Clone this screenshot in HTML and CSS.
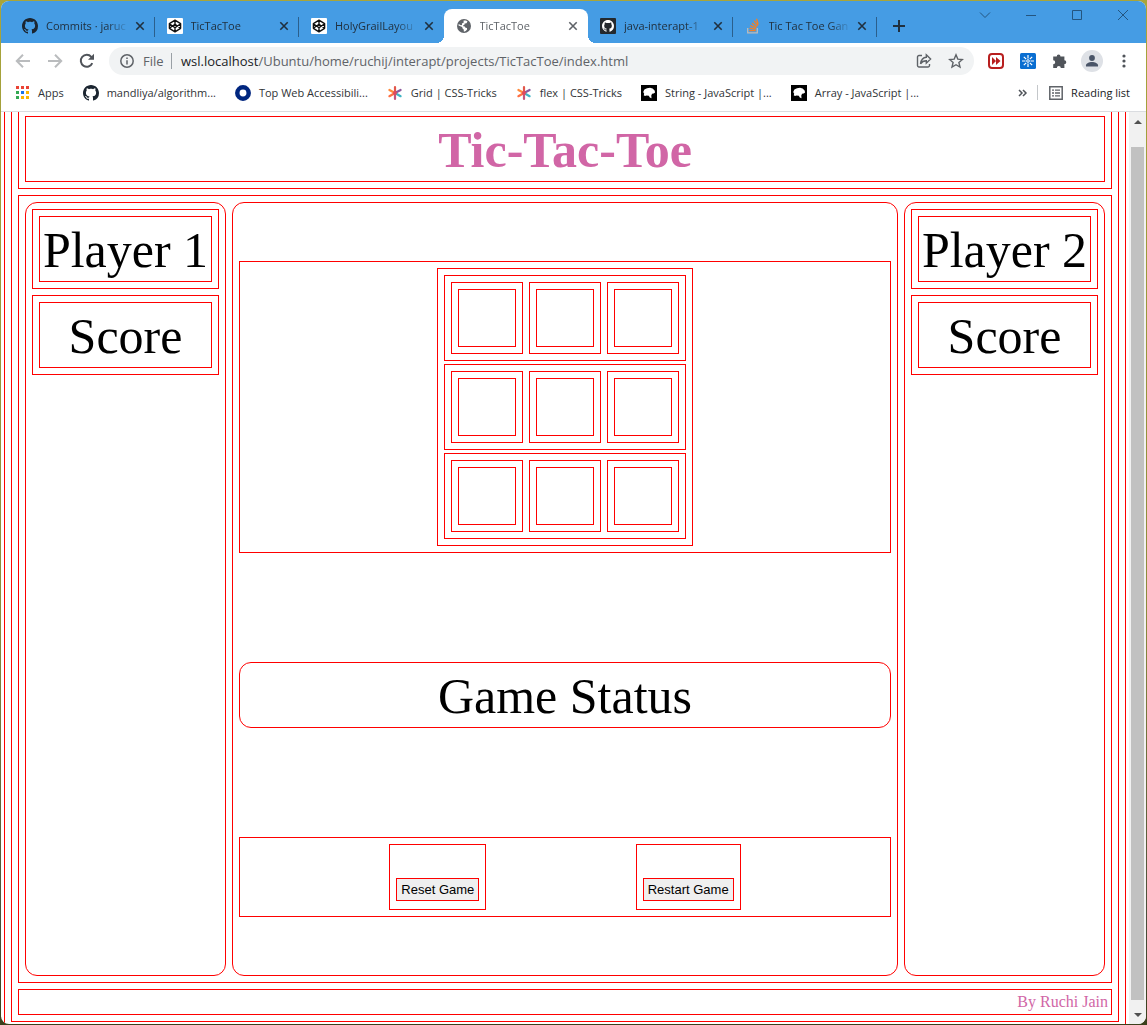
FILE: index.html
```html
<!DOCTYPE html>
<html lang="en">
<head>
<meta charset="utf-8">
<meta name="viewport" content="width=device-width, initial-scale=1">
<title>TicTacToe</title>
<link rel="stylesheet" href="styles.css">
</head>
<body>
<svg class="sprite" aria-hidden="true">
  <symbol id="github" viewBox="0 0 16 16"><path d="M8 0C3.58 0 0 3.58 0 8c0 3.54 2.29 6.53 5.47 7.59.4.07.55-.17.55-.38 0-.19-.01-.82-.01-1.49-2.01.37-2.53-.49-2.69-.94-.09-.23-.48-.94-.82-1.13-.28-.15-.68-.52-.01-.53.63-.01 1.08.58 1.23.82.72 1.21 1.87.87 2.33.66.07-.52.28-.87.51-1.07-1.78-.2-3.64-.89-3.64-3.95 0-.87.31-1.59.82-2.15-.08-.2-.36-1.02.08-2.12 0 0 .67-.21 2.2.82.64-.18 1.32-.27 2-.27s1.36.09 2 .27c1.53-1.04 2.2-.82 2.2-.82.44 1.1.16 1.92.08 2.12.51.56.82 1.27.82 2.15 0 3.07-1.87 3.75-3.65 3.95.29.25.54.73.54 1.48 0 1.07-.01 1.93-.01 2.2 0 .21.15.46.55.38A8.01 8.01 0 0 0 16 8c0-4.42-3.58-8-8-8z"/></symbol>
  <symbol id="codepen" viewBox="0 0 16 16"><rect width="16" height="16" rx="1" fill="#fff"/><path d="M8 2.2 13.600 5.700v4.600L8 13.800 2.400 10.300V5.700zM2.400 5.700 8 9.800 13.600 5.700M2.400 10.300 8 6.200l5.600 4.100M8 2.200v4M8 9.800v4" fill="none" stroke="#111" stroke-width="1.4" stroke-linejoin="round"/></symbol>
  <symbol id="close" viewBox="0 0 10 10"><path d="M1.3 1.3l7.4 7.4M8.7 1.3 1.3 8.7" fill="none" stroke="currentColor" stroke-width="1.6"/></symbol>
  <symbol id="asterisk" viewBox="0 0 16 16"><g fill="none" stroke-width="2.2" stroke-linecap="round"><path d="M8 8V2" stroke="#e2574c"/><path d="M8 8v6" stroke="#c2557f"/><path d="M8 8 2.400 5" stroke="#ff8a3c"/><path d="M8 8l-5.600 3.200" stroke="#ff7043"/><path d="M8 8l5.600-3" stroke="#8d5a9e"/><path d="M8 8l5.600 3.200" stroke="#3fb4c4"/></g><circle cx="8" cy="8" r="2" fill="#e04a5f"/></symbol>
  <symbol id="mdn" viewBox="0 0 16 16"><path d="M0 0h16v16H0z"/><path d="M2.200 7 3.400 4.600l2.600-1.400 3-.4 2.600.8 2 2 .5 2-1.500.9-1.500.3-.8 1.800.2 2.600-1.700-.8-1-1.600-2.200-.4-1.600.7-1.300-.9.500-1.500z" fill="#fff"/></symbol>
</svg>
<div class="window">
  <header class="tabstrip">
    <nav class="tabs" aria-label="Open tabs">
      <div class="tab"><svg class="icon16 dark"><use href="#github"/></svg><span class="tab-title">Commits · jaruc</span><button class="tab-close" aria-label="Close tab"><svg><use href="#close"/></svg></button></div>
      <div class="tab"><svg class="icon16"><use href="#codepen"/></svg><span class="tab-title">TicTacToe</span><button class="tab-close" aria-label="Close tab"><svg><use href="#close"/></svg></button></div>
      <div class="tab"><svg class="icon16"><use href="#codepen"/></svg><span class="tab-title">HolyGrailLayou</span><button class="tab-close" aria-label="Close tab"><svg><use href="#close"/></svg></button></div>
      <div class="tab active"><svg class="icon16" viewBox="0 0 16 16"><circle cx="8" cy="8" r="7" fill="#5f6368"/><path d="M7.6 2.4 10 2.6l1.5 1-1 1.6-1.8.3-.4 1.5-1.4.4.4.9 1.5.1.7 1.4 1.5.2.1 1.4-1.4 1.5-1.8.9-.2-2.3L6.400 10.200 6.200 8.900 2.500 7.500l.2-1.400 2.200 1.200 1.200-.4-.2-1.500 1.700-.6z" fill="#fff"/></svg><span class="tab-title">TicTacToe</span><button class="tab-close" aria-label="Close tab"><svg><use href="#close"/></svg></button></div>
      <div class="tab"><svg class="icon16" viewBox="0 0 16 16"><rect width="16" height="16" rx="1" fill="#24292e"/><svg x="2" y="2" width="12" height="12" fill="#fff"><use href="#github"/></svg></svg><span class="tab-title">java-interapt-1</span><button class="tab-close" aria-label="Close tab"><svg><use href="#close"/></svg></button></div>
      <div class="tab"><svg class="icon16" viewBox="0 0 16 16" fill="none"><path d="M2.700 10v4.800h9.600V10" stroke="#bcbbbb" stroke-width="1.300"/><path d="M4.300 12.700h6.400M4.500 10.400l6.300.8M5.200 7.700l5.900 2.200M6.900 5l5 3.700M9.200 2.700l3.700 4.900M11.500.8l1.700 5.600" stroke="#f48024" stroke-width="1.300"/></svg><span class="tab-title">Tic Tac Toe Gan</span><button class="tab-close" aria-label="Close tab"><svg><use href="#close"/></svg></button></div>
    </nav>
    <button class="new-tab" aria-label="New tab"><svg viewBox="0 0 12 12"><path d="M6 0v12M0 6h12" stroke="currentColor" stroke-width="2"/></svg></button>
    <div class="caption">
      <button aria-label="Search tabs"><svg viewBox="0 0 12 12"><path d="M1 3.500l5 5 5-5"/></svg></button>
      <button aria-label="Minimize"><svg viewBox="0 0 12 12"><path d="M1 6.500h10"/></svg></button>
      <button aria-label="Maximize"><svg viewBox="0 0 12 12"><path d="M1.500 1.500h9v9h-9z"/></svg></button>
      <button aria-label="Close"><svg viewBox="0 0 12 12"><path d="M1 1l10 10M11 1 1 11"/></svg></button>
    </div>
  </header>
  <div class="toolbar">
    <button class="tool muted" aria-label="Back"><svg viewBox="0 0 16 16"><path d="M15 8H2M8 1.800 1.800 8 8 14.200"/></svg></button>
    <button class="tool muted" aria-label="Forward"><svg viewBox="0 0 16 16"><path d="M1 8h13M8 1.800 14.200 8 8 14.200"/></svg></button>
    <button class="tool" aria-label="Reload"><svg viewBox="0 0 16 16"><path d="M13.300 10.200A6 6 0 1 1 12.300 3.800L14 5.500"/><path d="M15 .8v6H9z" fill="currentColor" stroke="none"/></svg></button>
    <div class="omnibox">
      <svg class="info" viewBox="0 0 14 14"><circle cx="7" cy="7" r="6.200"/><path d="M7 6.200v4.300M7 3.400v1.600"/></svg>
      <span class="scheme">File</span>
      <input class="url" aria-label="Address" value="wsl.localhost/Ubuntu/home/ruchij/interapt/projects/TicTacToe/index.html">
      <span class="url-view" aria-hidden="true"><b>wsl.localhost</b>/Ubuntu/home/ruchij/interapt/projects/TicTacToe/index.html</span>
      <button class="tool" aria-label="Share"><svg viewBox="0 0 16 16" class="thin"><path d="M6 2.500H3a1.500 1.500 0 0 0-1.500 1.500v8.500A1.500 1.500 0 0 0 3 14h9a1.500 1.500 0 0 0 1.500-1.500V11"/><path d="M10.300 1.800 14.600 6l-4.300 4.200V7.700C7.500 7.700 5.800 8.700 4.500 10.800 5 7.500 6.800 4.600 10.300 4.300z"/></svg></button>
      <button class="tool" aria-label="Bookmark this page"><svg viewBox="0 0 16 16" class="thin"><path d="M8 1.800l1.800 4.300 4.600.4-3.500 3 1.100 4.600L8 11.700l-4 2.400 1.100-4.600-3.500-3 4.600-.4z"/></svg></button>
    </div>
    <button class="tool" aria-label="Video extension"><svg viewBox="0 0 16 16"><rect x="1" y="1" width="14" height="14" rx="3" fill="#fff" stroke="#b81f1f" stroke-width="2"/><path d="M4 4l4 4-4 4zM8 4l4.500 4L8 12z" fill="#b81f1f" stroke="none"/></svg></button>
    <button class="tool" aria-label="Spark extension"><svg viewBox="0 0 16 16"><rect width="16" height="16" rx="1.500" fill="#0a6ed1" stroke="none"/><path d="M8 2v3.500M8 10.500V14M2 8h3.500M10.500 8H14M3.800 3.800l2.400 2.400M9.800 9.800l2.400 2.400M12.200 3.800 9.800 6.200M6.200 9.800l-2.400 2.400" stroke="#fff" stroke-width="1.200"/><circle cx="8" cy="8" r="1.300" stroke="#fff" stroke-width="1"/></svg></button>
    <button class="tool" aria-label="Extensions"><svg viewBox="0 0 16 16"><path d="M1.200 3.500H4.700a1.900 1.900 0 1 1 3.800 0h3.900v3.800a1.900 1.900 0 1 1 0 3.800V15H8.800a2 2 0 0 0-4 0H1.200v-3.700a2 2 0 0 0 0-4z" fill="currentColor" stroke="none"/></svg></button>
    <button class="tool" aria-label="Profile"><svg class="avatar" viewBox="0 0 22 22"><circle cx="11" cy="11" r="11" fill="#dee1e6" stroke="none"/><circle cx="11" cy="8" r="2.900" fill="#4a5568" stroke="none"/><path d="M5 16.500v-1.300c0-2 3-3.300 6-3.300s6 1.300 6 3.300v1.300z" fill="#4a5568" stroke="none"/></svg></button>
    <button class="tool" aria-label="Menu"><svg viewBox="0 0 16 16"><g fill="currentColor" stroke="none"><circle cx="8" cy="3" r="1.600"/><circle cx="8" cy="8" r="1.600"/><circle cx="8" cy="13" r="1.600"/></g></svg></button>
  </div>
  <nav class="bookmarks" aria-label="Bookmarks">
    <a href="#"><svg class="icon16" viewBox="0 0 16 16"><path d="M2 1h3v3H2zM7 1h3v3H7zM12 1h3v3h-3z" fill="#ea4335"/><path d="M2 6h3v3H2zM2 11h3v3H2z" fill="#34a853"/><path d="M7 6h3v3H7z" fill="#1a73e8"/><path d="M12 6h3v3h-3zM7 11h3v3H7zM12 11h3v3h-3z" fill="#fbb400"/></svg>Apps</a>
    <a href="#"><svg class="icon16 dark"><use href="#github"/></svg>mandliya/algorithm...</a>
    <a href="#"><svg class="icon16" viewBox="0 0 16 16"><circle cx="8" cy="8" r="5.700" fill="#fff" stroke="#00267f" stroke-width="4.500"/></svg>Top Web Accessibili...</a>
    <a href="#"><svg class="icon16"><use href="#asterisk"/></svg>Grid | CSS-Tricks</a>
    <a href="#"><svg class="icon16"><use href="#asterisk"/></svg>flex | CSS-Tricks</a>
    <a href="#"><svg class="icon16"><use href="#mdn"/></svg>String - JavaScript |...</a>
    <a href="#"><svg class="icon16"><use href="#mdn"/></svg>Array - JavaScript |...</a>
    <button class="more" aria-label="More bookmarks"><svg viewBox="0 0 10 8"><path d="M1 1l3 3-3 3M5 1l3 3-3 3" fill="none" stroke="currentColor" stroke-width="1.500"/></svg></button>
    <a class="reading" href="#"><svg class="icon14" viewBox="0 0 14 14" fill="none" stroke="#5f6368"><path d="M.8.800h12.400v12.400H.8z" stroke-width="1.500"/><path d="M3 4.200h2M6 4.200h5M3 7h2M6 7h5M3 9.800h2M6 9.800h5" stroke-width="1.300"/></svg>Reading list</a>
  </nav>
  <div class="viewport">
    <div class="root">
      <div class="page">
        <header class="title box"><h1 class="box">Tic-Tac-Toe</h1></header>
        <main class="box">
          <section class="player box">
            <div class="box"><div class="label box">Player 1</div></div>
            <div class="box"><div class="label box">Score</div></div>
          </section>
          <section class="game box">
            <div class="board-area box">
              <div class="board box">
                <div class="row box"><div class="cell box"><div class="box"></div></div><div class="cell box"><div class="box"></div></div><div class="cell box"><div class="box"></div></div></div>
                <div class="row box"><div class="cell box"><div class="box"></div></div><div class="cell box"><div class="box"></div></div><div class="cell box"><div class="box"></div></div></div>
                <div class="row box"><div class="cell box"><div class="box"></div></div><div class="cell box"><div class="box"></div></div><div class="cell box"><div class="box"></div></div></div>
              </div>
            </div>
            <div class="status label box">Game Status</div>
            <div class="controls box">
              <div class="control box"><button class="box">Reset Game</button></div>
              <div class="control box"><button class="box">Restart Game</button></div>
            </div>
          </section>
          <section class="player box">
            <div class="box"><div class="label box">Player 2</div></div>
            <div class="box"><div class="label box">Score</div></div>
          </section>
        </main>
        <footer class="box">By Ruchi Jain</footer>
      </div>
    </div>
    <div class="scrollbar" aria-hidden="true">
      <svg viewBox="0 0 8 4"><path d="M0 4 4 0l4 4z"/></svg>
      <div class="thumb"></div>
      <svg viewBox="0 0 8 4"><path d="M0 0l4 4 4-4z"/></svg>
    </div>
  </div>
</div>
</body>
</html>
```
FILE: styles.css
```css
* { box-sizing: border-box; }

body {
  margin: 0;
  padding: 1px;
  min-height: 100vh;
  display: flex;
  background: linear-gradient(#a9a53a, #8c8a3c 60%, #4a4d3a 90%, #3c401c);
  font-family: "Open Sans", "Noto Sans", sans-serif;
  font-size: 11px;
}

button {
  padding: 0;
  border: 0;
  background: none;
  color: inherit;
  font: inherit;
}

svg { display: block; flex: none; }
.sprite { position: absolute; width: 0; height: 0; }
.icon16 { width: 16px; height: 16px; }
.icon14 { width: 14px; height: 14px; }
.dark { fill: #1b2530; }

.window {
  flex: 1;
  min-width: 0;
  display: flex;
  flex-direction: column;
  border-radius: 8px;
  overflow: hidden;
  background: #fff;
}

/* Tab strip */
.tabstrip {
  display: flex;
  height: 42px;
  padding-left: 9px;
  background: #459ce4;
  color: #20303f;
}

.tabs {
  display: flex;
  flex: 0 1 867px;
  min-width: 0;
  padding-top: 8px;
}

.tab {
  position: relative;
  flex: 1 1 0;
  min-width: 0;
  display: flex;
  align-items: center;
  gap: 8px;
  padding: 0 10px 0 12px;
}

.tab::after {
  content: "";
  position: absolute;
  right: 0;
  top: 8px;
  width: 1px;
  height: 20px;
  background: #2b5f8c;
}

.tab.active::after,
.tab:has(+ .active)::after { display: none; }

.tab.active {
  background: #fff;
  color: #5f6368;
  border-radius: 8px 8px 0 0;
}

.tab.active::before {
  content: "";
  position: absolute;
  left: -8px;
  right: -8px;
  bottom: 0;
  height: 8px;
  background:
    radial-gradient(circle at 0 0, transparent 8px, #fff 8px) left / 8px 8px no-repeat,
    radial-gradient(circle at 100% 0, transparent 8px, #fff 8px) right / 8px 8px no-repeat;
}

.tab-title {
  flex: 1;
  min-width: 0;
  white-space: nowrap;
  line-height: 16px;
  mask-image: linear-gradient(to right, #000 75%, rgba(0, 0, 0, 0.1));
}

.tab-close svg { width: 10px; height: 10px; }

.new-tab { padding: 8px 16px 0; }
.new-tab svg { width: 12px; height: 12px; }

.caption {
  display: flex;
  align-items: flex-start;
  margin-left: auto;
  color: #24557f;
}

.caption button { width: 46px; height: 28px; }
.caption svg { width: 12px; height: 12px; margin: 0 auto; fill: none; stroke: currentColor; }

/* Toolbar */
.toolbar {
  display: flex;
  align-items: center;
  height: 36px;
  padding: 0 6px;
  color: #50545a;
}

.tool {
  flex: none;
  width: 32px;
  height: 28px;
}

.tool svg {
  width: 16px;
  height: 16px;
  margin: 0 auto;
  fill: none;
  stroke: currentColor;
  stroke-width: 2;
}

.tool .thin { stroke-width: 1.4; }
.tool .avatar { width: 22px; height: 22px; }
.muted { color: #babcbe; }

.omnibox {
  position: relative;
  flex: 1;
  min-width: 0;
  display: flex;
  align-items: center;
  height: 28px;
  margin: 0 6px;
  padding: 0 2px 0 11px;
  border-radius: 14px;
  background: #f1f3f4;
  color: #5f6368;
  font-size: 13px;
}

.info { width: 14px; height: 14px; fill: none; stroke: currentColor; stroke-width: 1.5; }

.scheme {
  margin: 0 9px;
  padding-right: 7px;
  border-right: 1px solid #9aa0a6;
  line-height: 16px;
}

.url {
  flex: 1;
  min-width: 0;
  padding: 0;
  border: 0;
  outline: 0;
  background: none;
  color: transparent;
  font: inherit;
}

/* Two-tone address laid over the field */
.url-view {
  position: absolute;
  left: 72px;
  pointer-events: none;
  white-space: nowrap;
}

.url-view b { font-weight: normal; color: #202124; }

/* Bookmarks bar */
.bookmarks {
  display: flex;
  align-items: center;
  gap: 19px;
  height: 33px;
  padding: 0 16px 5px 13px;
  border-bottom: 1px solid #dadce0;
}

.bookmarks a {
  display: flex;
  align-items: center;
  gap: 8px;
  color: #303336;
  text-decoration: none;
  white-space: nowrap;
}

.more { margin-left: auto; color: #50545a; }
.more svg { width: 10px; height: 8px; }

.bookmarks .reading {
  margin-left: -10px;
  padding-left: 11px;
  border-left: 1px solid #c4c7ca;
  color: #202124;
}

/* Web page */
.viewport {
  flex: 1;
  display: flex;
  font-family: "Liberation Serif", "Times New Roman", serif;
  font-size: 16px;
}

.box { border: 1px solid #f00; }

.root {
  flex: 1;
  min-width: 0;
  display: flex;
  margin: 0 3px;
  padding: 0 6px 2px;
  border: solid #f00;
  border-width: 0 1px;
}

.page {
  flex: 1;
  min-width: 0;
  display: flex;
  flex-direction: column;
  gap: 6px;
  padding: 0 6px 6px;
  border: solid #f00;
  border-width: 0 1px 1px;
}

.title {
  padding: 4px 6px 6px;
  border-top: 0;
}

h1, .label {
  margin: 0;
  padding: 4px 0 2px;
  font-size: 50px;
  line-height: 58px;
  text-align: center;
}

h1 { color: #d166a6; }

main {
  flex: 1;
  display: grid;
  grid-template-columns: 201px minmax(0, 1fr) 201px;
  gap: 6px;
  padding: 6px;
}

.player, .game, .status { border-radius: 12px; }

.player {
  display: flex;
  flex-direction: column;
  gap: 6px;
  padding: 6px;
}

.player > .box { padding: 6px; }
.player .label { white-space: nowrap; }

.game {
  display: flex;
  flex-direction: column;
  justify-content: space-around;
  padding: 3px;
}

.game > .box { margin: 3px; }

.board-area {
  display: flex;
  justify-content: center;
  padding: 6px;
}

.board {
  display: flex;
  flex-direction: column;
  gap: 3px;
  padding: 6px;
}

.row { display: flex; gap: 6px; padding: 6px; }
.cell { padding: 6px; }
.cell > .box { width: 58px; height: 58px; }

.controls {
  display: flex;
  justify-content: space-evenly;
  padding: 6px 3px;
}

.control {
  display: flex;
  align-items: flex-end;
  height: 66px;
  margin: 0 3px;
  padding: 0 6px 8px;
}

.control button {
  height: 23px;
  padding: 0 4px;
  border: 1px solid #f00;
  background: #efefef;
  color: #000;
  font: 13px "Liberation Sans", Arial, sans-serif;
}

footer {
  padding: 3px;
  color: #d166a6;
  line-height: 18px;
  text-align: right;
}

.scrollbar {
  flex: none;
  width: 17px;
  display: flex;
  flex-direction: column;
  align-items: center;
  gap: 23px;
  padding: 8px 0 7px;
  background: #f1f1f1;
}

.scrollbar svg { width: 8px; height: 4px; fill: #505050; }
.thumb { flex: 1; width: 13px; margin-bottom: -10px; background: #c1c1c1; }
```
